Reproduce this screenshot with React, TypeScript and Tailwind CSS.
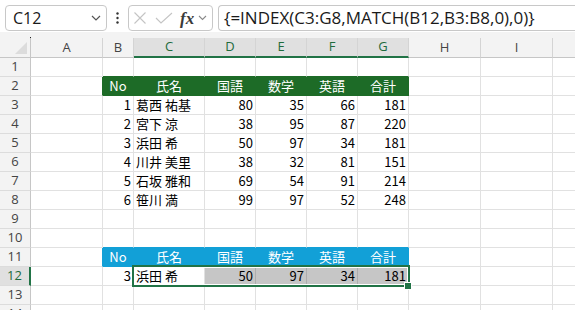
import React from "react";

type Fill = "green" | "blue" | "sel" | null;

const cols = [
  { key: "A", w: "w-[72px]", sel: false },
  { key: "B", w: "w-[31px]", sel: false },
  { key: "C", w: "w-[71px]", sel: true },
  { key: "D", w: "w-[51px]", sel: true },
  { key: "E", w: "w-[51px]", sel: true },
  { key: "F", w: "w-[51px]", sel: true },
  { key: "G", w: "w-[51px]", sel: true },
  { key: "H", w: "w-[72px]", sel: false },
  { key: "I", w: "w-[72px]", sel: false },
  { key: "J", w: "w-[72px]", sel: false },
];

const header = ["No", "氏名", "国語", "数学", "英語", "合計"];

const students = [
  ["1", "葛西 祐基", "80", "35", "66", "181"],
  ["2", "宮下 涼", "38", "95", "87", "220"],
  ["3", "浜田 希", "50", "97", "34", "181"],
  ["4", "川井 美里", "38", "32", "81", "151"],
  ["5", "石坂 雅和", "69", "54", "91", "214"],
  ["6", "笹川 満", "99", "97", "52", "248"],
];

// rows 1..14, columns A..J
const sheet: string[][] = [
  [],
  ["", ...header],
  ...students.map((s) => ["", ...s]),
  [],
  [],
  ["", ...header],
  ["", "3", "浜田 希", "50", "97", "34", "181"],
  [],
  [],
];

function fillAt(r: number, c: number): Fill {
  if (c < 1 || c > 6) return null;
  if (r === 2) return "green";
  if (r === 11) return "blue";
  if (r === 12 && c >= 3) return "sel";
  return null;
}

const isHead = (f: Fill) => f === "green" || f === "blue";

const bgCls: Record<string, string> = {
  green: "bg-[#1d6b27] text-white",
  blue: "bg-[#12a0d7] text-white",
  sel: "bg-[#c6c6c6] text-black",
  none: "bg-white text-black",
};
const rCls: Record<string, string> = {
  green: "border-r-[#1d6b27]",
  blue: "border-r-[#12a0d7]",
  sel: "border-r-[#adadad]",
  grid: "border-r-[#e1e1e1]",
};
const bCls: Record<string, string> = {
  green: "border-b-[#1d6b27]",
  blue: "border-b-[#12a0d7]",
  grid: "border-b-[#e1e1e1]",
};

function Cell({ r, c }: { r: number; c: number }) {
  const f = fillAt(r, c);
  const next = fillAt(r, c + 1);
  const below = fillAt(r + 1, c);
  const right = isHead(f) ? f! : isHead(next) ? next! : f === "sel" ? "sel" : "grid";
  const bottom = isHead(f) ? f! : isHead(below) ? below! : "grid";
  const v = sheet[r - 1][c] ?? "";
  const align = isHead(f) ? "justify-center" : c === 2 ? "justify-start" : "justify-end";
  return (
    <div
      className={`${cols[c].w} ${bgCls[f ?? "none"]} ${rCls[right]} ${bCls[bottom]} flex h-full shrink-0 items-center overflow-hidden whitespace-nowrap border-r border-b px-[2px] ${align}`}
    >
      {v}
    </div>
  );
}

function TopBar() {
  return (
    <div className="flex h-[32px] items-start bg-white pt-[5px] font-['Open_Sans',sans-serif] text-[#1a1a1a]">
      <div className="ml-[5px] flex h-[26px] w-[102px] items-center justify-between rounded-[4px] border border-[#c8c8c8] pr-[5px] pl-[7px] text-[16px]">
        <span>C12</span>
        <svg width="10" height="6" viewBox="0 0 10 6">
          <polyline points="1,1 5,5 9,1" fill="none" stroke="#555" strokeWidth="1.2" />
        </svg>
      </div>
      <div className="flex h-[26px] w-[21px] items-center justify-center">
        <svg width="3" height="12" viewBox="0 0 3 12">
          <circle cx="1.5" cy="1.5" r="1.2" fill="#333" />
          <circle cx="1.5" cy="6" r="1.2" fill="#333" />
          <circle cx="1.5" cy="10.5" r="1.2" fill="#333" />
        </svg>
      </div>
      <div className="flex h-[26px] w-[85px] items-center rounded-[4px] border border-[#c8c8c8] pl-[4px]">
        <svg width="14" height="14" viewBox="0 0 14 14">
          <path d="M1.5 1.5 L12.5 12.5 M12.5 1.5 L1.5 12.5" stroke="#c4c4c4" strokeWidth="1.1" />
        </svg>
        <svg width="18" height="12" viewBox="0 0 18 12" className="ml-[8px]">
          <polyline points="1,6 6,11 17,1" fill="none" stroke="#c4c4c4" strokeWidth="1.1" />
        </svg>
        <span className="ml-[7px] font-['Liberation_Serif',serif] text-[17px] font-bold italic leading-none text-[#3a3a3a]">
          fx
        </span>
        <svg width="9" height="6" viewBox="0 0 9 6" className="ml-[4px]">
          <polyline points="1,1 4.5,4.5 8,1" fill="none" stroke="#8a8a8a" strokeWidth="1.1" />
        </svg>
      </div>
      <div className="ml-[5px] flex h-[26px] flex-1 items-center rounded-l-[4px] border border-r-0 border-[#c8c8c8] pl-[5px] text-[17px] whitespace-nowrap">
        {"{=INDEX(C3:G8,MATCH(B12,B3:B8,0),0)}"}
      </div>
    </div>
  );
}

export default function App() {
  return (
    <div className="h-[310px] w-[575px] overflow-hidden bg-white">
      <TopBar />
      <div className="relative bg-[#f3f3f3]">
        <div className="h-[6px]" />
        {/* column headers */}
        <div className="flex h-[20px] font-['Open_Sans',sans-serif] text-[13px]">
          <div className="relative w-[31px] shrink-0 border-r border-b border-[#c6c6c6]">
            <svg width="12" height="12" viewBox="0 0 12 12" className="absolute right-[3px] bottom-[3px]">
              <polygon points="12,0 12,12 0,12" fill="#dcdcdc" />
            </svg>
            <div className="absolute -top-[1px] -right-[1px] h-[1px] w-[1px] bg-[#222]" />
          </div>
          {cols.map((col) => (
            <div
              key={col.key}
              className={`${col.w} flex shrink-0 items-center justify-center border-r border-r-[#d4d4d4] ${
                col.sel
                  ? "border-b-2 border-b-[#217346] bg-[#e0e0e0] text-[#1e6b3c]"
                  : "border-b border-b-[#c6c6c6] text-[#444]"
              }`}
            >
              {col.key}
            </div>
          ))}
        </div>
        {/* rows */}
        {sheet.map((_, i) => {
          const r = i + 1;
          const active = r === 12;
          return (
            <div key={r} className="flex h-[19px] font-['Noto_Sans_CJK_JP',sans-serif] text-[13px]">
              <div
                className={`flex w-[31px] shrink-0 items-center justify-center border-b border-b-[#dcdcdc] font-['Open_Sans',sans-serif] ${
                  active
                    ? "border-r-2 border-r-[#217346] bg-[#e0e0e0] text-[#1e6b3c]"
                    : "border-r border-r-[#c6c6c6] text-[#444]"
                }`}
              >
                {r}
              </div>
              {cols.map((col, c) => (
                <Cell key={col.key} r={r} c={c} />
              ))}
            </div>
          );
        })}
        {/* selection C12:G12 */}
        <div className="pointer-events-none absolute top-[233px] left-[132px] h-[22px] w-[278px] border-2 border-[#217346] shadow-[inset_0_0_0_1px_#fff]" />
        <div className="pointer-events-none absolute top-[250px] left-[404px] h-[8px] w-[8px] border border-white bg-[#217346]" />
      </div>
    </div>
  );
}
